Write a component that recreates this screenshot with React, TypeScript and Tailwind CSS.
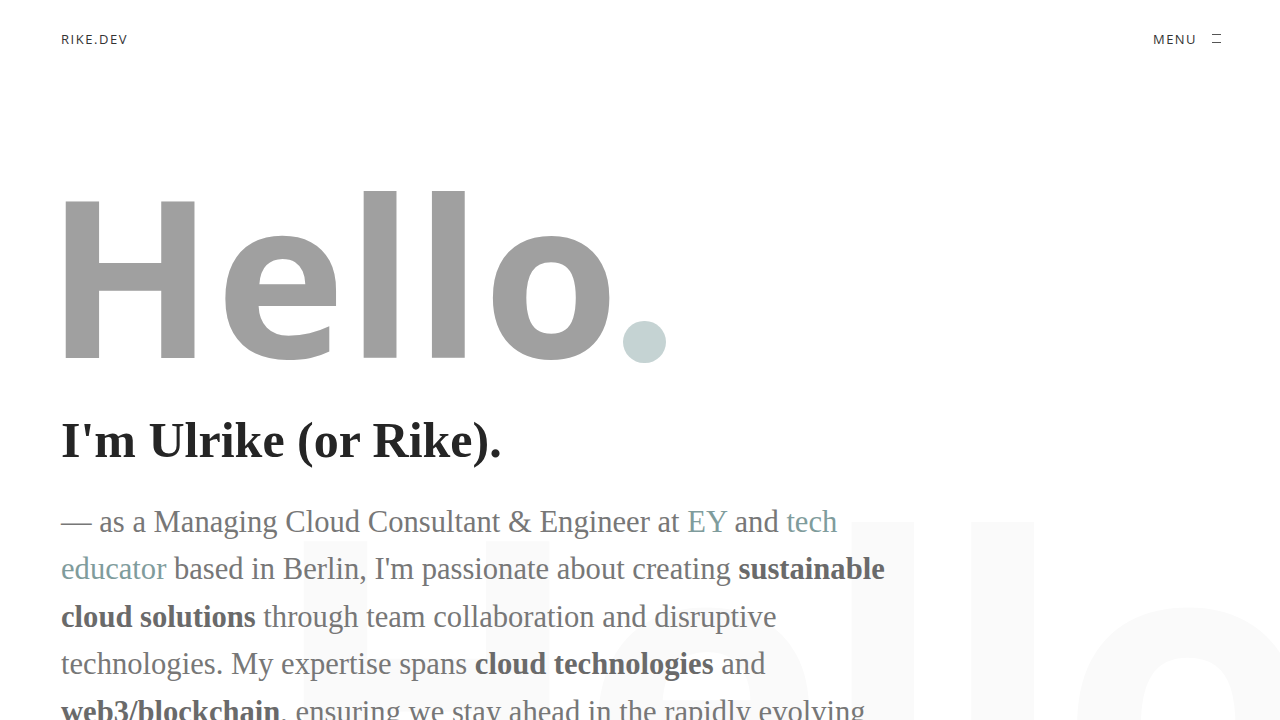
import React from "react";

export default function App() {
  return (
    <div className="relative min-h-[720px] w-full overflow-hidden bg-white">
      <div
        aria-hidden
        className="pointer-events-none absolute left-[266px] top-[468px] select-none whitespace-nowrap text-[420px] font-bold leading-none text-[#fafafa]"
        style={{ fontFamily: '"Open Sans", sans-serif', letterSpacing: "-0.02em" }}
      >
        Hello.
      </div>
      <div className="relative">
        <header className="flex items-center justify-between pl-[61px] pr-[59px] pt-[30px]">
          <div
            className="text-[13px] tracking-[0.12em] text-[#333]"
            style={{ fontFamily: '"Open Sans", sans-serif' }}
          >
            RIKE.DEV
          </div>
          <div className="flex items-center gap-[15px]">
            <span
              className="text-[13px] tracking-[0.11em] text-[#333]"
              style={{ fontFamily: '"Open Sans", sans-serif' }}
            >
              MENU
            </span>
            <span className="flex w-[9px] flex-col gap-[7px] pb-[2px]">
              <span className="h-px w-full bg-[#555]" />
              <span className="h-px w-full bg-[#555]" />
            </span>
          </div>
        </header>
        <main className="px-[61px] pt-[133px]">
          <h1
            className="-ml-[15px] flex items-end text-[220px] font-bold leading-[180px] text-[#a0a0a0]"
            style={{ fontFamily: '"Open Sans", sans-serif', letterSpacing: "0.005em" }}
          >
            <span>Hello</span>
            <span className="ml-[3px] inline-block h-[42px] w-[43px] rounded-full bg-[#c5d3d3]" />
          </h1>
          <h2
            className="mt-[52px] text-[50px] font-bold leading-none text-[#252525]"
            style={{ fontFamily: '"Liberation Serif", serif' }}
          >
            I'm Ulrike (or Rike).
          </h2>
          <p
            className="mt-[34px] max-w-[866px] text-[30.6px] leading-[47.5px] text-[#777]"
            style={{ fontFamily: '"Liberation Serif", serif' }}
          >
            — as a Managing Cloud Consultant &amp; Engineer at{" "}
            <a className="text-[#7f9c9c]">EY</a> and{" "}
            <a className="text-[#7f9c9c]">tech educator</a> based in Berlin, I'm passionate about creating{" "}
            <strong className="font-bold text-[#6a6a6a]">sustainable cloud solutions</strong> through team
            collaboration and disruptive technologies. My expertise spans{" "}
            <strong className="font-bold text-[#6a6a6a]">cloud technologies</strong> and{" "}
            <strong className="font-bold text-[#6a6a6a]">web3/blockchain</strong>, ensuring we stay ahead in
            the rapidly evolving digital landscape.
          </p>
        </main>
      </div>
    </div>
  );
}
